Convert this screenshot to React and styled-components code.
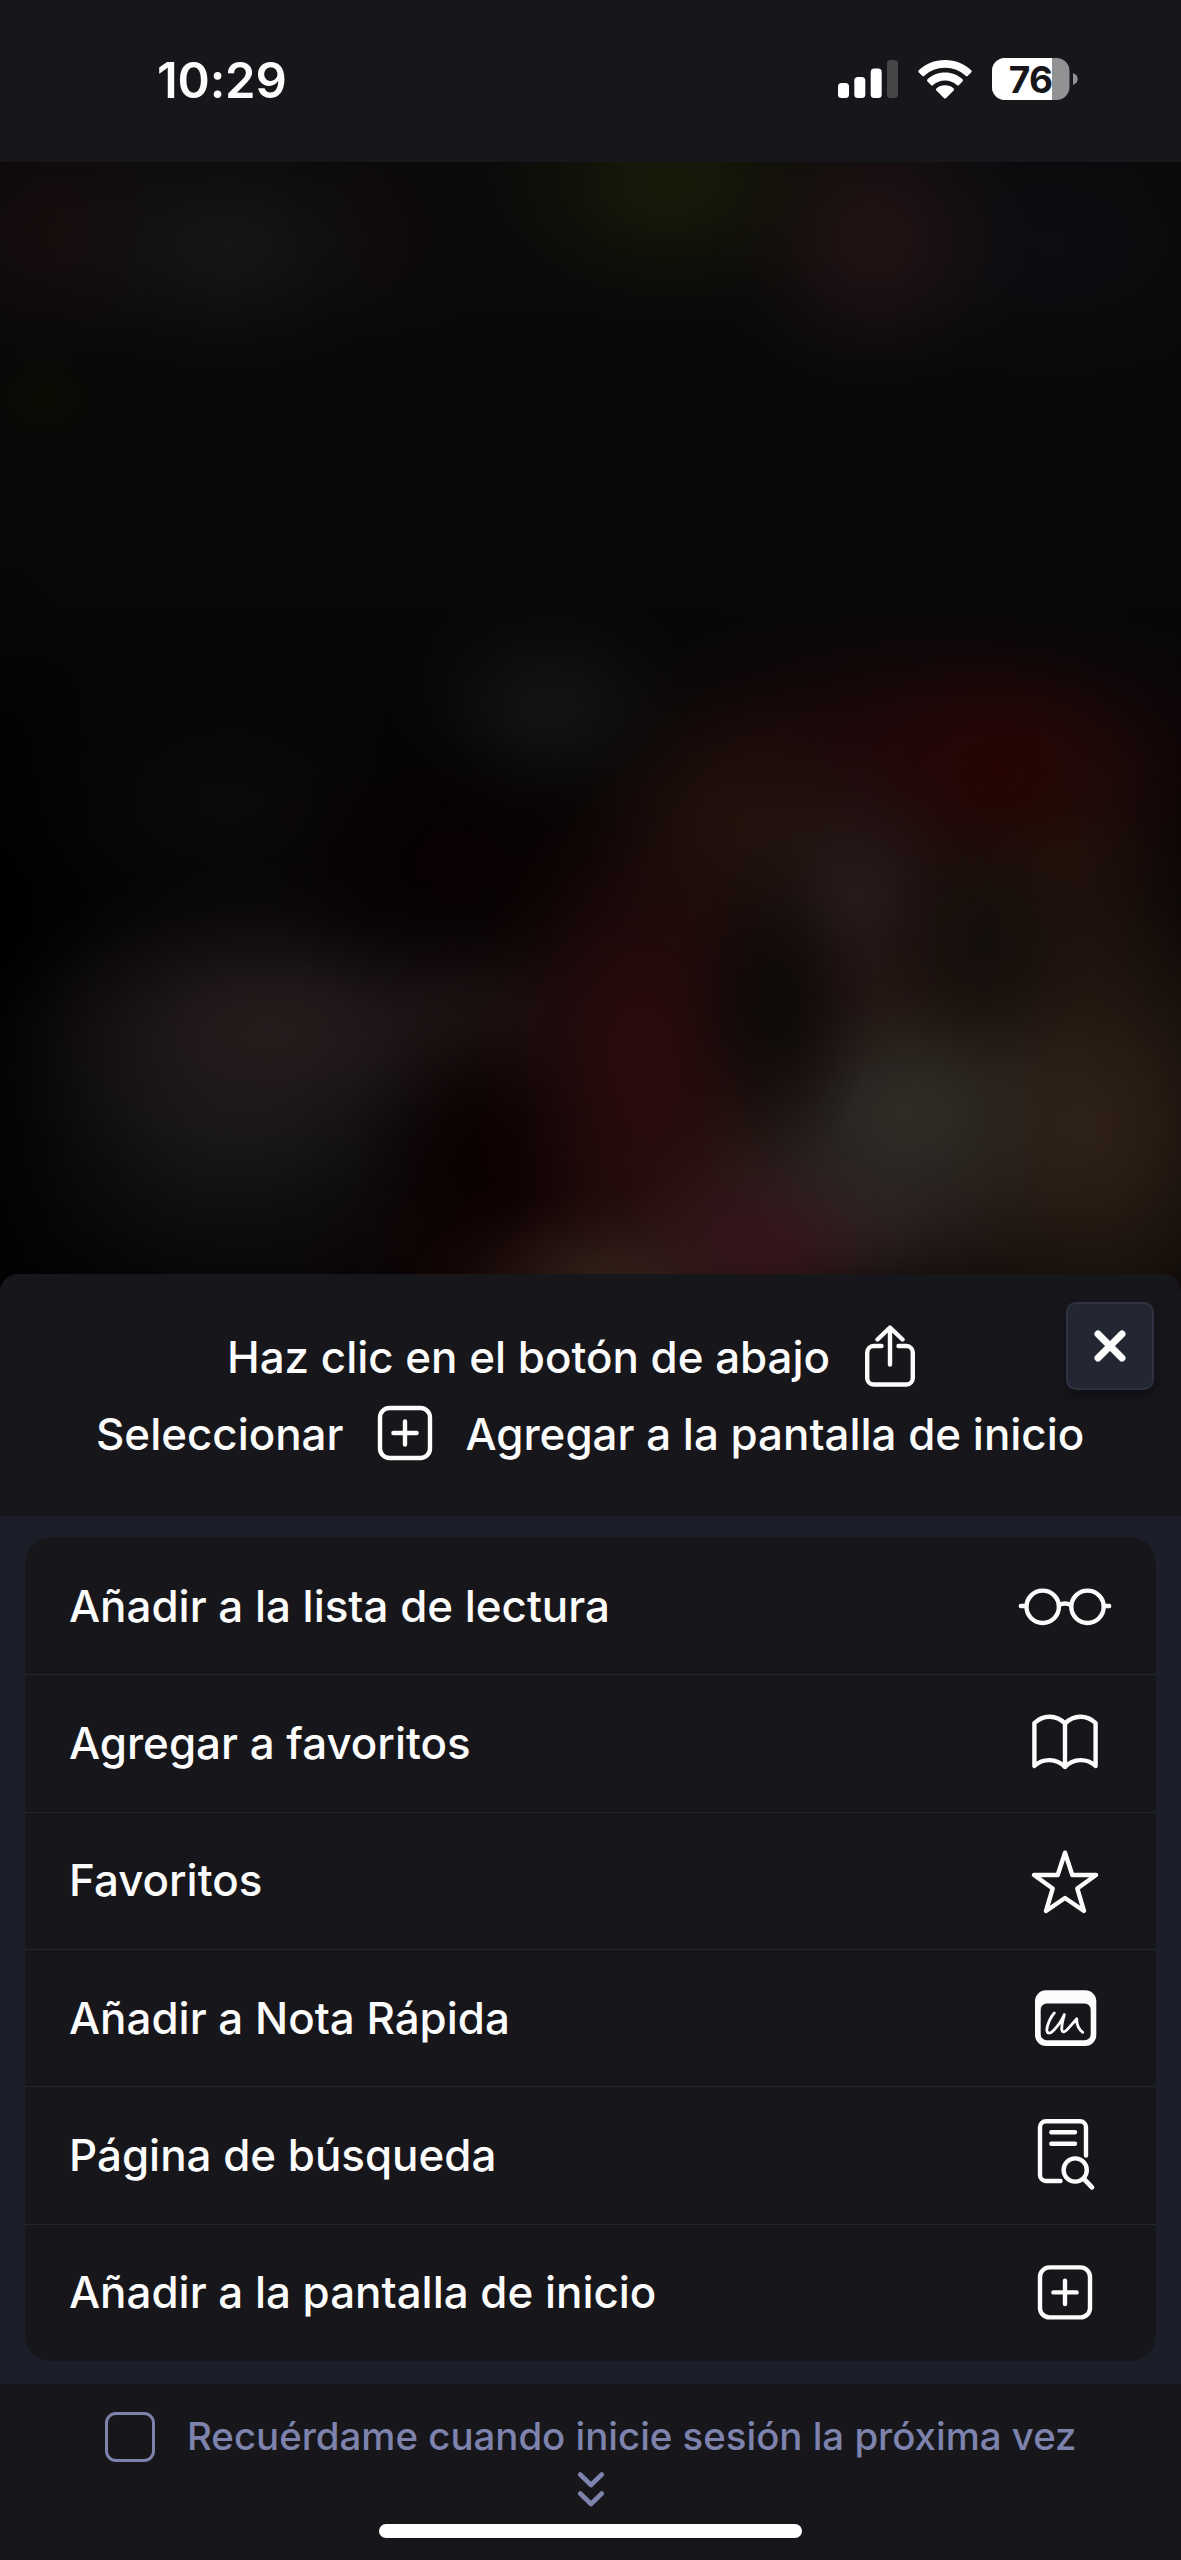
import React from "react";
import styled, { createGlobalStyle } from "styled-components";

const GlobalStyle = createGlobalStyle`
  *, *::before, *::after { box-sizing: border-box; }
  html, body { margin: 0; padding: 0; background: #17171b; }
  body { font-family: Inter, "Liberation Sans", sans-serif; color: #fcfcfd; }
`;

const Screen = styled.div`
  width: 1181px;
  height: 2560px;
  display: flex;
  flex-direction: column;
  background: #17171b;
  overflow: hidden;
`;

const StatusBar = styled.header`
  height: 162px;
  flex: none;
  display: flex;
  justify-content: space-between;
  align-items: flex-start;
  padding: 51px 103px 0 157px;
`;

const Clock = styled.time`
  font-size: 49px;
  line-height: 60px;
  font-weight: 600;
  letter-spacing: -0.2px;
`;

const StatusIcons = styled.div`
  display: flex;
  align-items: center;
  gap: 20px;
  height: 42px;
  margin-top: 7px;
`;

const BatteryText = styled.text`
  font: 700 37px Inter, "Liberation Sans", sans-serif;
  letter-spacing: -0.8px;
`;

const glow = ([x, y, rx, ry, color]) =>
  `radial-gradient(${rx}px ${ry}px at ${x}px ${y}px, ${color}f0 0%, ${color}c0 25%, ${color}70 50%, ${color}28 75%, ${color}00 100%)`;

const glows = [
  [226, 84, 190, 130, "#151616"],
  [60, 70, 180, 140, "#170c0d"],
  [375, 66, 120, 130, "#100a0a"],
  [670, 20, 200, 140, "#1a1a09"],
  [873, 76, 160, 160, "#231315"],
  [1050, 80, 230, 160, "#0d0d12"],
  [45, 235, 60, 55, "#0a0b02"],
  [550, 545, 160, 120, "#131413"],
  [775, 840, 100, 170, "#0d0a08"],
  [985, 780, 110, 140, "#140f0b"],
  [905, 950, 210, 170, "#302e28"],
  [855, 735, 140, 150, "#261c1a"],
  [765, 1078, 150, 100, "#36141b"],
  [620, 1115, 210, 90, "#321f19"],
  [850, 1050, 220, 140, "#2c2020"],
  [1090, 965, 260, 320, "#312217"],
  [1000, 610, 150, 130, "#250503"],
  [740, 660, 160, 150, "#22120c"],
  [1050, 690, 150, 180, "#20100a"],
  [640, 890, 170, 290, "#2c0b0d"],
  [700, 1020, 190, 180, "#28110e"],
  [480, 990, 130, 170, "#0d0102"],
  [450, 700, 200, 160, "#090001"],
  [270, 868, 300, 170, "#271c1d"],
  [230, 970, 280, 220, "#161717"],
  [480, 860, 180, 140, "#1b1011"],
  [230, 640, 240, 150, "#0c0a09"],
  [960, 600, 400, 170, "#24080b"],
  [850, 790, 450, 360, "#200c0b"],
  [520, 1080, 320, 150, "#120303"],
  [0, 800, 130, 450, "#000000"],
];

const Backdrop = styled.div`
  height: 1128px;
  margin-bottom: -16px;
  flex: none;
  background: ${glows.map(glow).join(", ")},
    linear-gradient(180deg, #0a0a0a 0, #080808 300px, #070708 450px, #030303 620px, #030202 100%);
`;

const Sheet = styled.section`
  position: relative;
  flex: 1;
  display: flex;
  flex-direction: column;
  background: #17171b;
  border-radius: 18px 18px 0 0;
`;

const Instructions = styled.div`
  height: 242px;
  flex: none;
  display: flex;
  flex-direction: column;
  padding-top: 45px;
  font-size: 43.9px;
  font-weight: 500;
  white-space: nowrap;
`;

const InstructionLine = styled.p`
  margin: 0;
  height: 77px;
  line-height: 77px;
  display: flex;
  align-items: center;
  padding-left: ${(p) => p.$indent}px;
  gap: ${(p) => p.$gap}px;
  svg { flex: none; margin-bottom: 3px; }
`;

const CloseButton = styled.button`
  position: absolute;
  top: 28px;
  right: 27px;
  width: 88px;
  height: 88px;
  padding: 0;
  display: grid;
  place-items: center;
  border: 2px solid #2e313f;
  border-radius: 10px;
  background: #222732;
  box-shadow: 0 8px 12px rgba(8, 9, 14, 0.45);
`;

const MenuArea = styled.div`
  height: 868px;
  flex: none;
  padding: 21px 25px 23px;
  background: #1c1f2a;
`;

const Menu = styled.ul`
  margin: 0;
  padding: 0;
  height: 824px;
  list-style: none;
  display: grid;
  grid-template-rows: repeat(6, 1fr);
  border-radius: 26px;
  background: #17171b;
  overflow: hidden;
`;

const MenuItem = styled.li`
  display: flex;
  align-items: center;
  justify-content: space-between;
  padding: 0 43px 0 44px;
  font-size: 43.9px;
  font-weight: 500;
  white-space: nowrap;
  & + & { box-shadow: inset 0 1px 0 #26272b; }
`;

const Footer = styled.footer`
  flex: 1;
  display: flex;
  flex-direction: column;
  align-items: center;
  padding-top: 28px;
`;

const Remember = styled.label`
  align-self: flex-start;
  display: flex;
  align-items: center;
  gap: 32px;
  height: 50px;
  margin-left: 105px;
  color: #7e83ae;
  font-size: 38.4px;
  font-weight: 500;
  white-space: nowrap;
`;

const RememberText = styled.span`
  padding-bottom: 2px;
`;

const Checkbox = styled.span`
  width: 50px;
  height: 50px;
  border: 3px solid #7e83ae;
  border-radius: 11px;
`;

const Chevrons = styled.svg`
  margin-top: 9px;
  flex: none;
`;

const HomeIndicator = styled.div`
  width: 423px;
  height: 14px;
  margin-top: 15px;
  border-radius: 7px;
  background: #ffffff;
`;

const stroke = {
  fill: "none",
  stroke: "#fcfcfd",
  strokeWidth: 4.4,
  strokeLinecap: "round",
  strokeLinejoin: "round",
};

const RowIcon = ({ children }) => (
  <svg width="96" height="80" viewBox="0 0 96 80" {...stroke}>{children}</svg>
);

const Glasses = () => (
  <RowIcon>
    <circle cx="25.7" cy="40.8" r="16.2" />
    <circle cx="70.5" cy="40.8" r="16.2" />
    <path d="M42 39Q48 36 54 39M3.8 40H9M87 40H92.2" />
  </RowIcon>
);

const Book = () => (
  <RowIcon>
    <path d="M17.4 63V20C26 11.500 39.500 11.500 48 20.500C56.500 11.500 70 11.500 78.600 20V63C70 55 56.500 55 48 64C39.500 55 26 55 17.400 63ZM48 20.500V64" />
  </RowIcon>
);

const Star = () => (
  <RowIcon>
    <path d="M48 12.700L55.300 35H79L60.300 48.500L67 71L48 58L29 71L35.700 48.500L17 35H40.700Z" />
  </RowIcon>
);

const QuickNote = () => (
  <RowIcon>
    <path
      fill="#fcfcfd"
      stroke="none"
      fillRule="evenodd"
      d="M29 12.300H68.300A11 11 0 0 1 79.300 23.300V57A11 11 0 0 1 68.300 68H29A11 11 0 0 1 18 57V23.300A11 11 0 0 1 29 12.300ZM29.700 25.600A6 6 0 0 0 23.700 31.600V56.300A6 6 0 0 0 29.700 62.300H67.700A6 6 0 0 0 73.700 56.300V31.600A6 6 0 0 0 67.700 25.600Z"
    />
    <path strokeWidth="2.800" d="M37.300 35C33.500 39 30 47 29.800 52C30 56.500 33.500 55.500 36 53C41 48 45 42 47.300 36.500C46.500 41 44.500 45.500 44.700 51C45.300 56 48.500 53.500 51.300 50.300L59.800 40.800C59.500 46 62 51.500 65.700 54.300" />
  </RowIcon>
);

const PageSearch = () => (
  <RowIcon>
    <path d="M69 40.500V12.300A6 6 0 0 0 63 6.300H29A6 6 0 0 0 23 12.300V60A6 6 0 0 0 29 66H43.500" />
    <path d="M34.300 17.300H58M34.300 28.700H58" />
    <circle cx="58.200" cy="55" r="11.600" />
    <path strokeWidth="4.800" d="M67 64L75 72.300" />
  </RowIcon>
);

const PlusShape = () => (
  <>
    <rect x="23" y="15.400" width="50" height="50" rx="9.500" />
    <path d="M48 28.800V52M36.400 40.400H59.600" />
  </>
);

const AddHome = () => <RowIcon><PlusShape /></RowIcon>;

const items = [
  ["Añadir a la lista de lectura", Glasses],
  ["Agregar a favoritos", Book],
  ["Favoritos", Star],
  ["Añadir a Nota Rápida", QuickNote],
  ["Página de búsqueda", PageSearch],
  ["Añadir a la pantalla de inicio", AddHome],
];

export default function App() {
  return (
    <Screen>
      <GlobalStyle />
      <StatusBar>
        <Clock>10:29</Clock>
        <StatusIcons>
          <svg width="60" height="42" viewBox="0 0 60 42" fill="#fff">
            <rect x="0" y="25" width="11" height="15" rx="3.500" />
            <rect x="16.300" y="19" width="11" height="21" rx="3.500" />
            <rect x="32.700" y="10.500" width="11" height="29.500" rx="3.500" />
            <rect x="49" y="2" width="11" height="38" rx="3.500" fill="#464649" />
          </svg>
          <svg width="54" height="42" viewBox="0 0 54 42" fill="#fff">
            <path d="M27 2C37.500 2 46.500 6 53.200 12.200Q54.200 13.300 53.200 14.400L49.800 17.800Q48.700 18.800 47.600 17.800C42 12.700 35 9.800 27 9.800S12 12.700 6.400 17.800Q5.300 18.800 4.200 17.800L.8 14.400Q-.2 13.300.8 12.200C7.500 6 16.500 2 27 2Z" />
            <path d="M27 14.600C34 14.600 40 17.200 44.500 21.300Q45.600 22.400 44.500 23.500L41 27Q39.900 28 38.800 27C35.500 24.200 31.500 22.500 27 22.500S18.500 24.200 15.200 27Q14.100 28 13 27L9.500 23.500Q8.400 22.400 9.500 21.300C14 17.200 20 14.600 27 14.600Z" />
            <path d="M27 27.300C30.500 27.300 33.500 28.500 35.600 30.400Q36.700 31.500 35.600 32.600L28.100 40Q27 41 25.900 40L18.400 32.600Q17.300 31.500 18.400 30.400C20.500 28.500 23.500 27.300 27 27.300Z" />
          </svg>
          <svg width="86" height="42" viewBox="0 0 86 42">
            <defs>
              <clipPath id="battery-body">
                <rect width="77.500" height="42" rx="13" />
              </clipPath>
            </defs>
            <g clipPath="url(#battery-body)">
              <rect width="78" height="42" fill="#929295" />
              <rect width="60" height="42" fill="#fff" />
            </g>
            <path d="M81 15C84.500 16.300 85.700 18.500 85.700 21S84.500 25.700 81 27Z" fill="#929295" />
            <BatteryText x="38.500" y="34.500" textAnchor="middle" fill="#17171b">76</BatteryText>
          </svg>
        </StatusIcons>
      </StatusBar>
      <Backdrop />
      <Sheet>
        <Instructions>
          <InstructionLine $indent={227} $gap={35}>
            <span>Haz clic en el botón de abajo</span>
            <svg width="50" height="62" viewBox="0 0 50 62" {...stroke}>
              <path d="M16.500 21H8.500A6.500 6.500 0 0 0 2.200 27.500V53A6.500 6.500 0 0 0 8.500 59.500H41.500A6.500 6.500 0 0 0 47.800 53V27.500A6.500 6.500 0 0 0 41.500 21H33.500M25 39.500V3M12.500 14.500L25 2.500L37.500 14.500" />
            </svg>
          </InstructionLine>
          <InstructionLine $indent={96} $gap={34}>
            <span>Seleccionar</span>
            <svg width="54" height="54" viewBox="21 13.400 54 54" overflow="visible" {...stroke}><PlusShape /></svg>
            <span>Agregar a la pantalla de inicio</span>
          </InstructionLine>
          <CloseButton aria-label="Cerrar">
            <svg width="36" height="36" viewBox="0 0 36 36" {...stroke} strokeWidth="7">
              <path d="M6 6L30 30M30 6L6 30" />
            </svg>
          </CloseButton>
        </Instructions>
        <MenuArea>
          <Menu>
            {items.map(([label, Icon]) => (
              <MenuItem key={label}>
                <span>{label}</span>
                <Icon />
              </MenuItem>
            ))}
          </Menu>
        </MenuArea>
        <Footer>
          <Remember>
            <Checkbox role="checkbox" aria-checked="false" />
            <RememberText>Recuérdame cuando inicie sesión la próxima vez</RememberText>
          </Remember>
          <Chevrons width="30" height="38" viewBox="0 0 30 38" {...stroke} stroke="#7e83ae" strokeWidth="4.600">
            <path d="M4.200 3.500L15 14L25.800 3.500M4.200 22.500L15 33L25.800 22.500" />
          </Chevrons>
          <HomeIndicator />
        </Footer>
      </Sheet>
    </Screen>
  );
}
